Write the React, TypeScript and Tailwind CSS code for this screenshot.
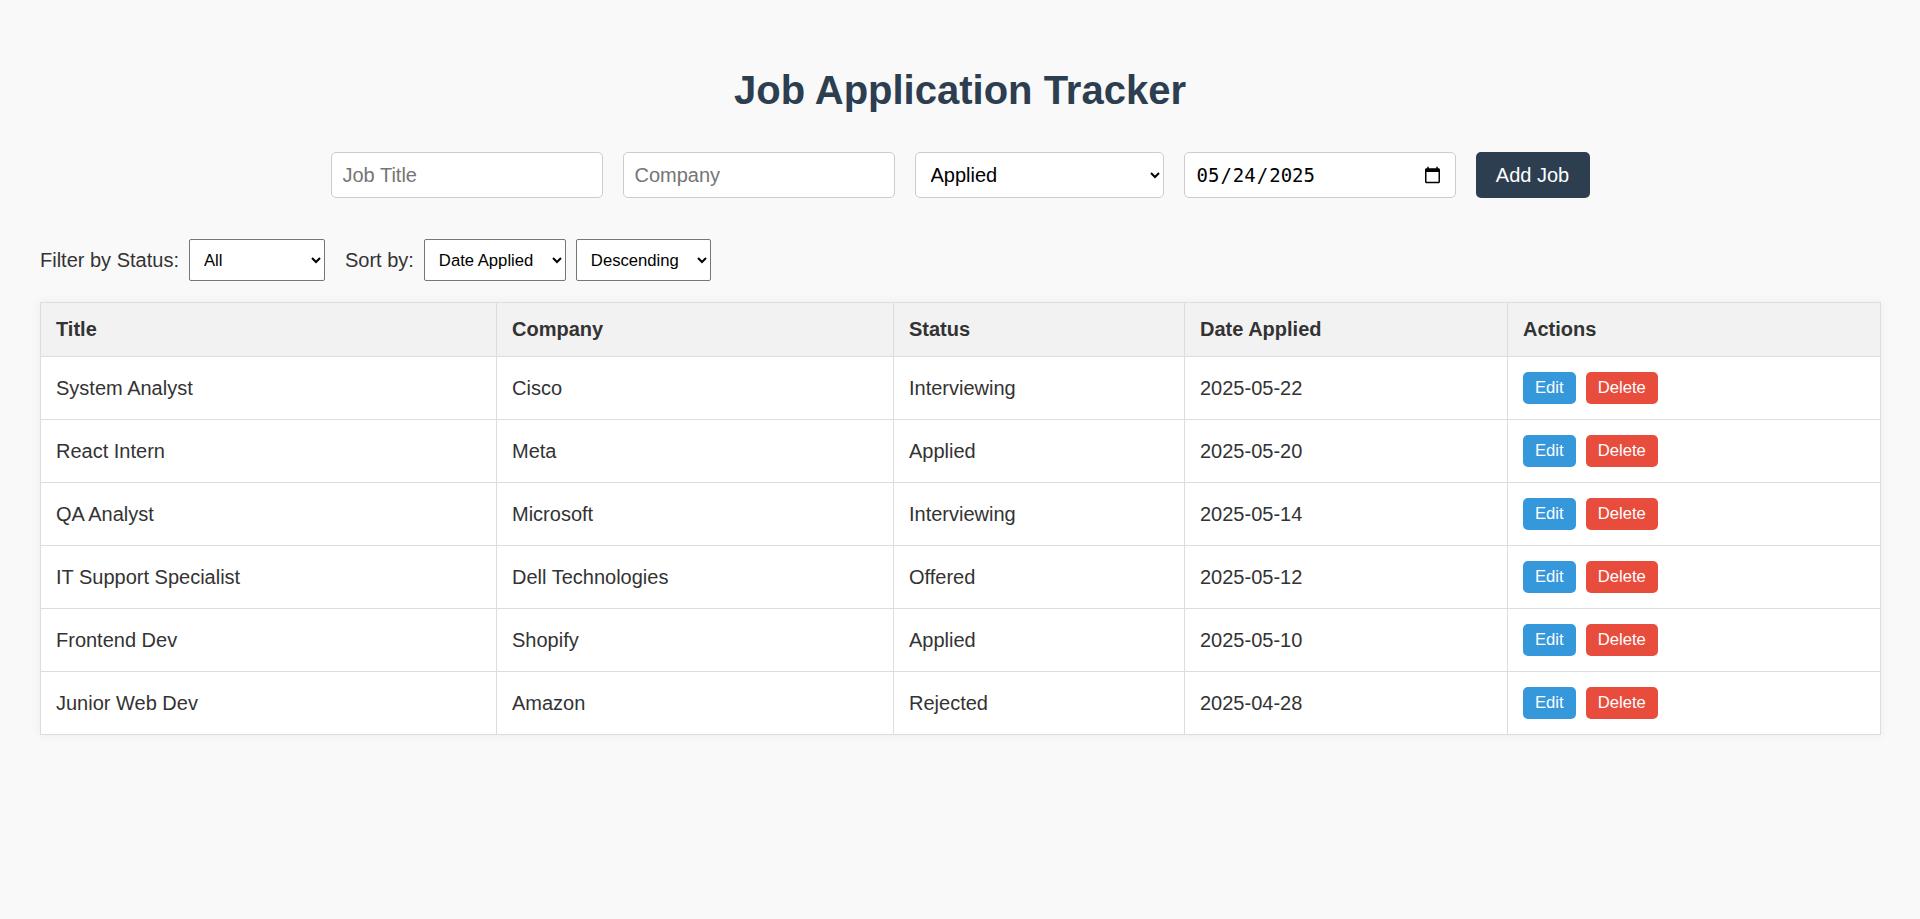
import { useState } from "react"

interface Job {
  title: string
  company: string
  status: string
  date: string
}

const jobs: Job[] = [
  { title: "System Analyst", company: "Cisco", status: "Interviewing", date: "2025-05-22" },
  { title: "React Intern", company: "Meta", status: "Applied", date: "2025-05-20" },
  { title: "QA Analyst", company: "Microsoft", status: "Interviewing", date: "2025-05-14" },
  { title: "IT Support Specialist", company: "Dell Technologies", status: "Offered", date: "2025-05-12" },
  { title: "Frontend Dev", company: "Shopify", status: "Applied", date: "2025-05-10" },
  { title: "Junior Web Dev", company: "Amazon", status: "Rejected", date: "2025-04-28" },
]

const statuses = ["Applied", "Interviewing", "Offered", "Rejected"]

const JobRow = ({ job }: { job: Job }) => {
  return (
    <tr className="bg-white">
      <td className="border border-[#ddd] px-[15px] py-[15px]">{job.title}</td>
      <td className="border border-[#ddd] px-[15px] py-[15px]">{job.company}</td>
      <td className="border border-[#ddd] px-[15px] py-[15px]">{job.status}</td>
      <td className="border border-[#ddd] px-[15px] py-[15px]">{job.date}</td>
      <td className="border border-[#ddd] px-[15px] py-[15px]">
        <div className="flex gap-[10px]">
          <button className="h-[32px] px-[12px] rounded-[5px] bg-[#3498db] text-white text-[16.67px] leading-none">
            Edit
          </button>
          <button className="h-[32px] px-[12px] rounded-[5px] bg-[#e74c3c] text-white text-[16.67px] leading-none">
            Delete
          </button>
        </div>
      </td>
    </tr>
  )
}

export default function App() {
  const [date, setDate] = useState("2025-05-24")

  return (
    <div className="min-h-screen bg-[#f9f9f9] px-[40px] pt-[40px] text-[#333] text-[20px] font-['Liberation_Sans',Arial,sans-serif]">
      <h1 className="mt-[27px] text-center text-[40px] leading-[46px] font-bold text-[#2c3e50]">
        Job Application Tracker
      </h1>

      <div className="mt-[39px] flex justify-center gap-[20px]">
        <input
          placeholder="Job Title"
          className="w-[272px] h-[46px] px-[11px] bg-white border border-[#ccc] rounded-[5px] text-[20px] placeholder:text-[#757575] outline-none"
        />
        <input
          placeholder="Company"
          className="w-[272px] h-[46px] px-[11px] bg-white border border-[#ccc] rounded-[5px] text-[20px] placeholder:text-[#757575] outline-none"
        />
        <select
          defaultValue="Applied"
          className="w-[249px] h-[46px] px-[11px] bg-white border border-[#ccc] rounded-[5px] text-[20px] text-black"
        >
          {statuses.map((s) => (
            <option key={s}>{s}</option>
          ))}
        </select>
        <input
          type="date"
          value={date}
          onChange={(e) => setDate(e.target.value)}
          className="w-[272px] h-[46px] px-[11px] bg-white border border-[#ccc] rounded-[5px] text-[19px] text-black font-['DejaVu_Sans_Mono',monospace]"
        />
        <button className="w-[114px] h-[46px] rounded-[5px] bg-[#2c3e50] text-white text-[20px]">Add Job</button>
      </div>

      <div className="mt-[41px] flex items-center h-[42px]">
        <span>Filter by Status:</span>
        <select
          defaultValue="All"
          className="ml-[10px] w-[136px] h-[42px] px-[10px] bg-white border border-[#767676] rounded-[2px] text-[16.67px] text-black"
        >
          <option>All</option>
          {statuses.map((s) => (
            <option key={s}>{s}</option>
          ))}
        </select>
        <span className="ml-[20px]">Sort by:</span>
        <select className="ml-[10px] w-[142px] h-[42px] px-[10px] bg-white border border-[#767676] rounded-[2px] text-[16.67px] text-black">
          <option>Date Applied</option>
          <option>Title</option>
          <option>Company</option>
        </select>
        <select className="ml-[10px] w-[135px] h-[42px] px-[10px] bg-white border border-[#767676] rounded-[2px] text-[16.67px] text-black">
          <option>Descending</option>
          <option>Ascending</option>
        </select>
      </div>

      <table className="mt-[21px] w-[1840px] table-fixed border-collapse bg-white text-left shadow-[0_0_10px_rgba(0,0,0,0.06)]">
        <thead>
          <tr className="bg-[#f2f2f2]">
            <th className="w-[456px] border border-[#ddd] px-[15px] py-[15px] font-bold leading-[23px]">Title</th>
            <th className="w-[397px] border border-[#ddd] px-[15px] py-[15px] font-bold leading-[23px]">Company</th>
            <th className="w-[291px] border border-[#ddd] px-[15px] py-[15px] font-bold leading-[23px]">Status</th>
            <th className="w-[323px] border border-[#ddd] px-[15px] py-[15px] font-bold leading-[23px]">Date Applied</th>
            <th className="w-[373px] border border-[#ddd] px-[15px] py-[15px] font-bold leading-[23px]">Actions</th>
          </tr>
        </thead>
        <tbody>
          {jobs.map((job, index) => (
            <JobRow key={index} job={job} />
          ))}
        </tbody>
      </table>
    </div>
  )
}
